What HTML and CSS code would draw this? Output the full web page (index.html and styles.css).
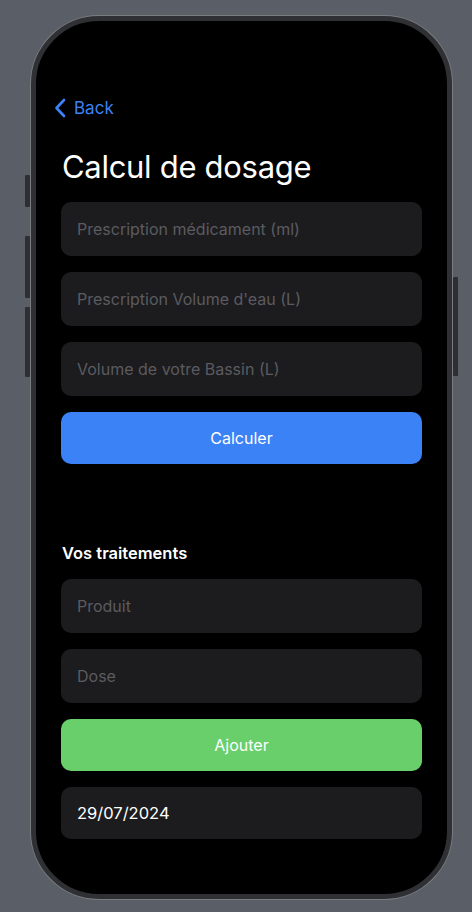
FILE: index.html
```html
<!DOCTYPE html>
<html lang="fr">
<head>
<meta charset="utf-8">
<link rel="stylesheet" href="styles.css">
</head>
<body>
<div class="stage">
  <div class="buttons-left">
    <span class="hw hw-action"></span>
    <span class="hw hw-vol"></span>
    <span class="hw hw-vol2"></span>
  </div>
  <div class="phone">
    <div class="screen">
      <div class="nav">
        <svg class="chev" width="12" height="20" viewBox="0 0 12 20"><path d="M10 2 L2.5 10 L10 18" fill="none" stroke="#3b82f6" stroke-width="2.6" stroke-linecap="round" stroke-linejoin="round"/></svg>
        <span class="back">Back</span>
      </div>
      <h1 class="title">Calcul de dosage</h1>
      <div class="group">
        <div class="field placeholder">Prescription médicament (ml)</div>
        <div class="field placeholder">Prescription Volume d'eau (L)</div>
        <div class="field placeholder">Volume de votre Bassin (L)</div>
        <div class="btn btn-blue">Calculer</div>
      </div>
      <h2 class="section">Vos traitements</h2>
      <div class="group">
        <div class="field placeholder">Produit</div>
        <div class="field placeholder">Dose</div>
        <div class="btn btn-green">Ajouter</div>
        <div class="field field-date">29/07/2024</div>
      </div>
    </div>
  </div>
  <div class="buttons-right">
    <span class="hw hw-power"></span>
  </div>
</div>
</body>
</html>
```

FILE: styles.css
```css
* { box-sizing: border-box; }
html, body { margin: 0; padding: 0; }
body {
  background: #5a5e66;
  width: 472px;
  height: 912px;
  overflow: hidden;
  font-family: Inter, "Noto Sans", sans-serif;
}
.stage {
  display: flex;
  padding-top: 16px;
  padding-left: 25px;
}
.buttons-left {
  width: 6px;
  display: flex;
  flex-direction: column;
}
.hw {
  display: block;
  background: #2e2f32;
  border-radius: 1px;
}
.hw-action { width: 5px; height: 32px; margin-top: 159px; }
.hw-vol { width: 5px; height: 62px; margin-top: 29px; }
.hw-vol2 { width: 5px; height: 70px; margin-top: 9px; }
.buttons-right { width: 6px; display: flex; flex-direction: column; }
.hw-power { width: 5px; height: 99px; margin-top: 261px; margin-left: 1px; }

.phone {
  width: 421px;
  height: 883px;
  border-radius: 68px;
  border: 5px solid #2f3033;
  box-shadow: 0 0 0 1px #7a7c80;
  background: #000;
  overflow: hidden;
}
.screen {
  padding: 77px 25px 0 25px;
  color: #fff;
}
.nav {
  display: flex;
  align-items: center;
  gap: 8px;
  height: 20px;
  margin-left: -25px;
  padding-left: 18px;
}
.chev { display: block; }
.back {
  color: #3b82f6;
  font-size: 17px;
  line-height: 20px;
}
.title {
  margin: 30px 0 0 1px;
  font-size: 31px;
  font-weight: 400;
  line-height: 38px;
  letter-spacing: -0.3px;
}
.group {
  display: flex;
  flex-direction: column;
  gap: 16px;
  margin-top: 16px;
}
.field {
  height: 54px;
  border-radius: 10px;
  background: #1c1c1e;
  display: flex;
  align-items: center;
  padding-left: 16px;
  font-size: 16px;
}
.placeholder { color: #5b5b60; }
.field-date { height: 52px; color: #fff; font-size: 16.5px; }
.btn {
  height: 52px;
  border-radius: 10px;
  display: flex;
  align-items: center;
  justify-content: center;
  color: #fff;
  font-size: 16px;
}
.btn-blue { background: #3b82f6; }
.btn-green { background: #68cf6b; }
.section {
  margin: 79px 0 0 1px;
  font-size: 16.5px;
  font-weight: 600;
  line-height: 20px;
}
.section + .group { margin-top: 16px; }
```
